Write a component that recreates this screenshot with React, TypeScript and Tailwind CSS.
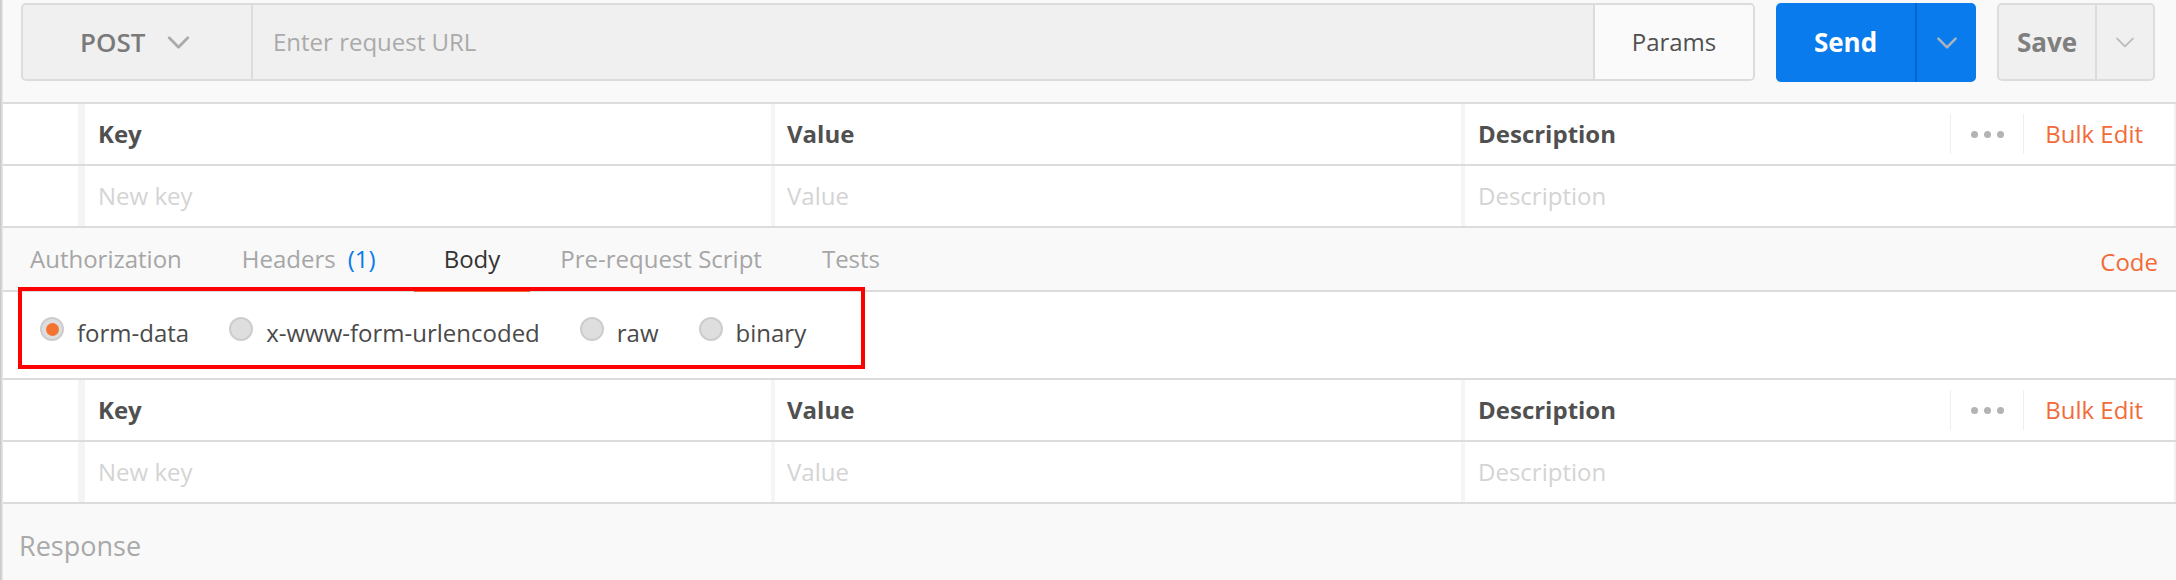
import React from "react";

const Chevron = ({
  className,
  stroke,
  width = 3,
}: {
  className: string;
  stroke: string;
  width?: number;
}) => (
  <svg viewBox="0 0 24 14" className={className} fill="none">
    <path
      d="M2 2l10 10L22 2"
      stroke={stroke}
      strokeWidth={width}
      strokeLinecap="round"
      strokeLinejoin="round"
    />
  </svg>
);

function TopBar() {
  return (
    <div className="flex h-[104px] border-b-2 border-[#dcdcdc] bg-[#f9f9f9] pl-[18px] pr-[21px] pt-[3px] gap-[21px]">
      <div className="flex flex-1 h-[78px] rounded-[5px] border-2 border-[#dcdcdc] bg-[#f0f0f0] overflow-hidden">
        <div className="flex items-center w-[230px] border-r-2 border-[#dcdcdc] pl-[57px]">
          <span className="text-[26px] font-semibold text-[#7a7a7a] leading-none">POST</span>
          <Chevron className="ml-[22px] w-[23px] h-[13px]" stroke="#ababab" />
        </div>
        <div className="flex flex-1 items-center pl-[20px] text-[24px] text-[#aaaaaa]">
          Enter request URL
        </div>
        <div className="flex items-center justify-center w-[160px] border-l-2 border-[#dcdcdc] bg-[#fafafa] text-[24px] text-[#505050]">
          Params
        </div>
      </div>

      <div className="flex w-[200px] h-[79px] rounded-[5px] bg-[#097bed] overflow-hidden">
        <div className="flex items-center justify-center w-[139px] text-[26px] font-bold text-white">
          Send
        </div>
        <div className="w-[2px] bg-[#0866c8]" />
        <div className="flex flex-1 items-center justify-center">
          <Chevron className="w-[22px] h-[12px]" stroke="#a9b2bd" />
        </div>
      </div>

      <div className="flex w-[158px] h-[78px] rounded-[5px] border-2 border-[#dcdcdc] bg-[#f0f0f0] overflow-hidden">
        <div className="flex items-center justify-center w-[96px] text-[26px] font-bold text-[#7f7f7f]">
          Save
        </div>
        <div className="flex flex-1 items-center justify-center border-l-2 border-[#dcdcdc]">
          <Chevron className="w-[20px] h-[11px]" stroke="#bdbdbd" width={2.5} />
        </div>
      </div>
    </div>
  );
}

function Dots() {
  return (
    <div className="flex items-center gap-[6px]">
      <span className="w-[7px] h-[7px] rounded-full bg-[#b3b3b3]" />
      <span className="w-[7px] h-[7px] rounded-full bg-[#b3b3b3]" />
      <span className="w-[7px] h-[7px] rounded-full bg-[#b3b3b3]" />
    </div>
  );
}

function KeyValueTable() {
  return (
    <div className="flex flex-col text-[24px]">
      <div className="flex h-[62px] border-b-2 border-[#dcdcdc] bg-white">
        <div className="w-[75px]" />
        <div className="w-[7px] bg-[#f4f4f4]" />
        <div className="flex items-center w-[686px] pl-[13px] font-bold text-[#505050]">Key</div>
        <div className="w-[4px] bg-[#f5f5f5]" />
        <div className="flex items-center w-[686px] pl-[12px] font-bold text-[#505050]">Value</div>
        <div className="w-[4px] bg-[#f5f5f5]" />
        <div className="flex flex-1 items-center pl-[13px]">
          <span className="font-bold text-[#505050]">Description</span>
          <div className="ml-auto flex items-center h-full">
            <div className="w-px h-[40px] bg-[#eeeeee]" />
            <div className="flex items-center justify-center w-[72px]">
              <Dots />
            </div>
            <div className="w-px h-[40px] bg-[#eeeeee]" />
            <span className="pl-[21px] pr-[31px] text-[#f26b3a]">Bulk Edit</span>
          </div>
        </div>
        <div className="w-[2px] bg-[#f2f2f2]" />
      </div>
      <div className="flex h-[62px] border-b-2 border-[#dcdcdc] bg-white text-[#d4d4d4]">
        <div className="w-[75px]" />
        <div className="w-[7px] bg-[#f4f4f4]" />
        <div className="flex items-center w-[686px] pl-[13px]">New key</div>
        <div className="w-[4px] bg-[#f5f5f5]" />
        <div className="flex items-center w-[686px] pl-[12px]">Value</div>
        <div className="w-[4px] bg-[#f5f5f5]" />
        <div className="flex flex-1 items-center pl-[13px]">Description</div>
        <div className="w-[2px] bg-[#f2f2f2]" />
      </div>
    </div>
  );
}

const tabs = [
  { label: "Authorization", cls: "pl-[27px] pr-[30px]" },
  { label: "Headers", cls: "pl-[30px] pr-[38px]", count: "(1)" },
  { label: "Body", cls: "px-[30px]", active: true },
  { label: "Pre-request Script", cls: "px-[30px]" },
  { label: "Tests", cls: "px-[30px]" },
];

function Tabs() {
  return (
    <div className="flex h-[64px] border-b-2 border-[#dcdcdc] bg-[#f9f9f9] text-[24px]">
      {tabs.map((t) => (
        <div
          key={t.label}
          className={`relative flex items-center ${t.cls} ${t.active ? "text-[#333333]" : "text-[#a6a6a6]"}`}
        >
          {t.label}
          {t.count && <span className="ml-[12px] text-[#097bed]">{t.count}</span>}
          {t.active && (
            <div className="absolute left-0 right-0 bottom-[-2px] h-[3px] bg-[#f26b3a]" />
          )}
        </div>
      ))}
      <div className="ml-auto flex items-center pr-[18px] pt-[6px] text-[#f26b3a]">Code</div>
    </div>
  );
}

function Radio({ label, checked }: { label: string; checked?: boolean }) {
  return (
    <div className="flex items-center gap-[13px]">
      <div className="flex items-center justify-center w-[24px] h-[24px] -mt-[8px] rounded-full border-2 border-[#cdcdcd] bg-[#dedede]">
        {checked && <div className="w-[13px] h-[13px] rounded-full bg-[#f37430]" />}
      </div>
      <span className="text-[24px] text-[#4a4a4a]">{label}</span>
    </div>
  );
}

function BodyTypes() {
  return (
    <div className="relative flex items-center h-[88px] border-b-2 border-[#dcdcdc] bg-white pl-[37px] pb-[4px] gap-[40px]">
      <Radio label="form-data" checked />
      <Radio label="x-www-form-urlencoded" />
      <Radio label="raw" />
      <Radio label="binary" />
      <div className="absolute left-[15px] top-[-5px] w-[847px] h-[82px] border-[4px] border-[#ff0000]" />
    </div>
  );
}

export default function App() {
  return (
    <div className="flex w-[2176px] h-[580px] overflow-hidden bg-white font-['Open_Sans',sans-serif]">
      <div className="w-[3px] bg-linear-to-r from-[#c4c4c4] to-[#ebebeb]" />
      <div className="flex flex-col flex-1">
        <TopBar />
        <KeyValueTable />
        <Tabs />
        <BodyTypes />
        <KeyValueTable />
        <div className="flex-1 bg-[#f9f9f9] pl-[16px] pt-[22px] text-[27px] text-[#a9a9a9]">
          Response
        </div>
      </div>
    </div>
  );
}
